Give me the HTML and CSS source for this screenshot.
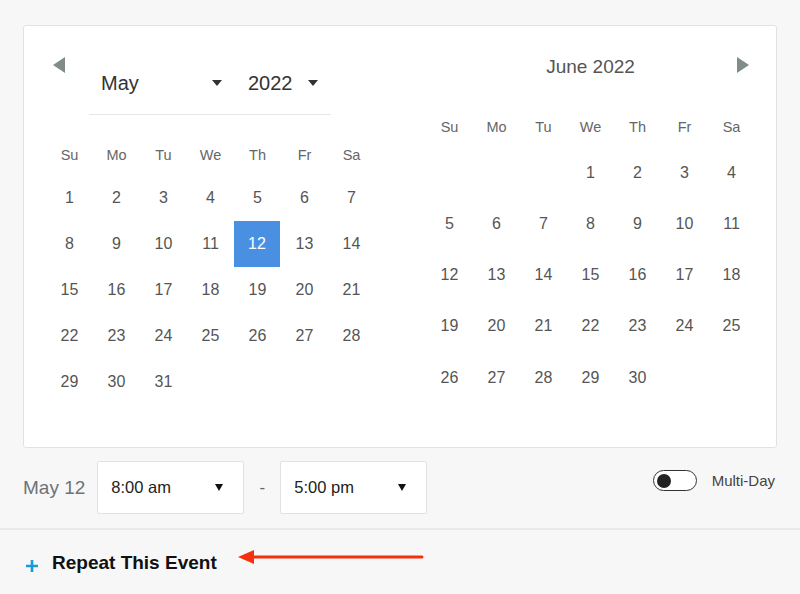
FILE: index.html
```html
<!DOCTYPE html>
<html lang="en">

<head>
    <meta charset="UTF-8">
    <title>Event Date</title>
    <link rel="stylesheet" href="styles.css">
</head>

<body>
    <div class="picker">
        <!-- Two month calendar -->
        <div class="calendar-card">
            <div class="month month-left">
                <div class="month-head">
                    <span class="nav-arrow prev"></span>
                    <div class="month-selects">
                        <div class="select select-month">
                            <span>May</span>
                            <span class="caret"></span>
                        </div>
                        <div class="select select-year">
                            <span>2022</span>
                            <span class="caret"></span>
                        </div>
                    </div>
                </div>
                <div class="weekdays">
                    <span>Su</span><span>Mo</span><span>Tu</span><span>We</span><span>Th</span><span>Fr</span><span>Sa</span>
                </div>
                <div class="days" id="may"></div>
            </div>

            <div class="month month-right">
                <div class="month-head">
                    <span></span>
                    <div class="month-title">June 2022</div>
                    <span class="nav-arrow next"></span>
                </div>
                <div class="weekdays">
                    <span>Su</span><span>Mo</span><span>Tu</span><span>We</span><span>Th</span><span>Fr</span><span>Sa</span>
                </div>
                <div class="days" id="june"></div>
            </div>
        </div>

        <!-- Time row -->
        <div class="time-row">
            <span class="date-label">May 12</span>
            <div class="time-select">
                <span>8:00 am</span>
                <span class="caret small"></span>
            </div>
            <span class="time-dash">-</span>
            <div class="time-select">
                <span>5:00 pm</span>
                <span class="caret small"></span>
            </div>
            <div class="multi-day">
                <span class="toggle"><span class="knob"></span></span>
                <span>Multi-Day</span>
            </div>
        </div>
    </div>

    <div class="repeat-row">
        <svg class="plus" width="12" height="12" viewBox="0 0 12 12">
            <path d="M6 0V12M0 6H12" stroke="#1a9bd8" stroke-width="2.6" />
        </svg>
        <span class="repeat-label">Repeat This Event</span>
        <svg class="annotation" width="186" height="16" viewBox="0 0 186 16">
            <path d="M15 8H184" stroke="#f5300f" stroke-width="3" stroke-linecap="round" />
            <path d="M0 8L16 1V15Z" fill="#f5300f" />
        </svg>
    </div>

    <script>
        function buildMonth(id, offset, count, selected) {
            const box = document.getElementById(id);
            for (let i = 0; i < offset; i++) {
                box.appendChild(document.createElement('span'));
            }
            for (let d = 1; d <= count; d++) {
                const cell = document.createElement('span');
                cell.textContent = d;
                if (d === selected) cell.className = 'selected';
                box.appendChild(cell);
            }
        }

        buildMonth('may', 0, 31, 12);
        buildMonth('june', 3, 30, null);
    </script>
</body>

</html>
```

FILE: styles.css
```css
* {
    box-sizing: border-box;
    margin: 0;
    padding: 0;
}

body {
    font-family: 'Liberation Sans', Arial, sans-serif;
    background: #f7f7f7;
    color: #555;
    width: 800px;
    height: 594px;
    overflow: hidden;
}

.picker {
    padding: 25px 23px 0;
}

/* Calendar card */
.calendar-card {
    background: #fff;
    border: 1px solid #e1e3e3;
    border-radius: 3px;
    padding: 0 21px 42px 22px;
    display: flex;
    gap: 51px;
}

.month {
    width: 329px;
}

.nav-arrow {
    width: 0;
    height: 0;
    border-top: 8px solid transparent;
    border-bottom: 8px solid transparent;
}

.nav-arrow.prev {
    border-right: 12px solid #7f8c88;
    margin-left: 7px;
}

.nav-arrow.next {
    border-left: 12px solid #7f8c88;
    justify-self: end;
    margin-right: 6px;
}

.month-left .month-head {
    display: flex;
    align-items: flex-start;
    padding-top: 31px;
}

.month-selects {
    display: flex;
    width: 242px;
    margin: 8px 0 0 24px;
    padding-bottom: 13px;
    border-bottom: 1px solid #e6e8e8;
}

.select {
    display: flex;
    align-items: center;
    height: 36px;
    font-size: 20px;
    color: #333;
    padding-left: 12px;
}

.select-month {
    width: 147px;
}

.select-month .caret {
    margin-left: auto;
    margin-right: 14px;
}

.select-year {
    flex: 1;
}

.select-year .caret {
    margin-left: auto;
    margin-right: 13px;
}

.caret {
    width: 0;
    height: 0;
    border-left: 5px solid transparent;
    border-right: 5px solid transparent;
    border-top: 6px solid #333;
}

.caret.small {
    border-left-width: 4px;
    border-right-width: 4px;
    border-top: 7px solid #111;
}

.month-right .month-head {
    display: grid;
    grid-template-columns: 1fr auto 1fr;
    align-items: start;
    padding-top: 31px;
}

.month-title {
    font-size: 19px;
    line-height: 20px;
    color: #555;
}

.weekdays,
.days {
    display: grid;
    grid-template-columns: repeat(7, 47px);
}

.weekdays span {
    height: 30px;
    line-height: 30px;
    text-align: center;
    font-size: 14.5px;
    color: #666;
}

.month-left .weekdays {
    margin-top: 25px;
}

.month-right .weekdays {
    margin-top: 35px;
}

.days {
    margin-top: 5px;
}

.days span {
    display: flex;
    align-items: center;
    justify-content: center;
    font-size: 16px;
    color: #555;
}

.month-left .days span {
    height: 46px;
}

.month-right .days span {
    height: 51.25px;
}

.days span.selected {
    background: #4a90e2;
    color: #fff;
    width: 46px;
}

/* Time row */
.time-row {
    display: flex;
    align-items: center;
    margin-top: 13px;
    height: 53px;
}

.date-label {
    font-size: 19px;
    color: #6d7378;
    margin-right: 12px;
}

.time-select {
    display: flex;
    align-items: center;
    justify-content: space-between;
    width: 147px;
    height: 53px;
    background: #fff;
    border: 1px solid #e2e2e2;
    border-radius: 2px;
    padding: 0 20px 0 13px;
    font-size: 16.5px;
    color: #222;
}

.time-dash {
    width: 36px;
    text-align: center;
    font-size: 17px;
    color: #666;
}

.multi-day {
    display: flex;
    align-items: center;
    gap: 15px;
    margin-left: auto;
    padding-right: 2px;
    align-self: flex-start;
    margin-top: 9px;
    font-size: 15px;
    color: #444;
}

.toggle {
    display: flex;
    align-items: center;
    width: 44px;
    height: 21px;
    border: 1.5px solid #333;
    border-radius: 11px;
    padding-left: 3px;
    background: #fff;
}

.knob {
    width: 14px;
    height: 14px;
    border-radius: 50%;
    background: #222;
}

/* Repeat row */
.repeat-row {
    margin-top: 14px;
    border-top: 2px solid #e9e9e9;
    padding: 21px 0 0 26px;
    display: flex;
    align-items: flex-start;
}

.plus {
    margin-top: 9px;
    margin-right: 14px;
}

.repeat-label {
    font-size: 19px;
    font-weight: bold;
    color: #111;
    line-height: 24px;
}

.annotation {
    margin-left: 21px;
    margin-top: -2px;
}
```
